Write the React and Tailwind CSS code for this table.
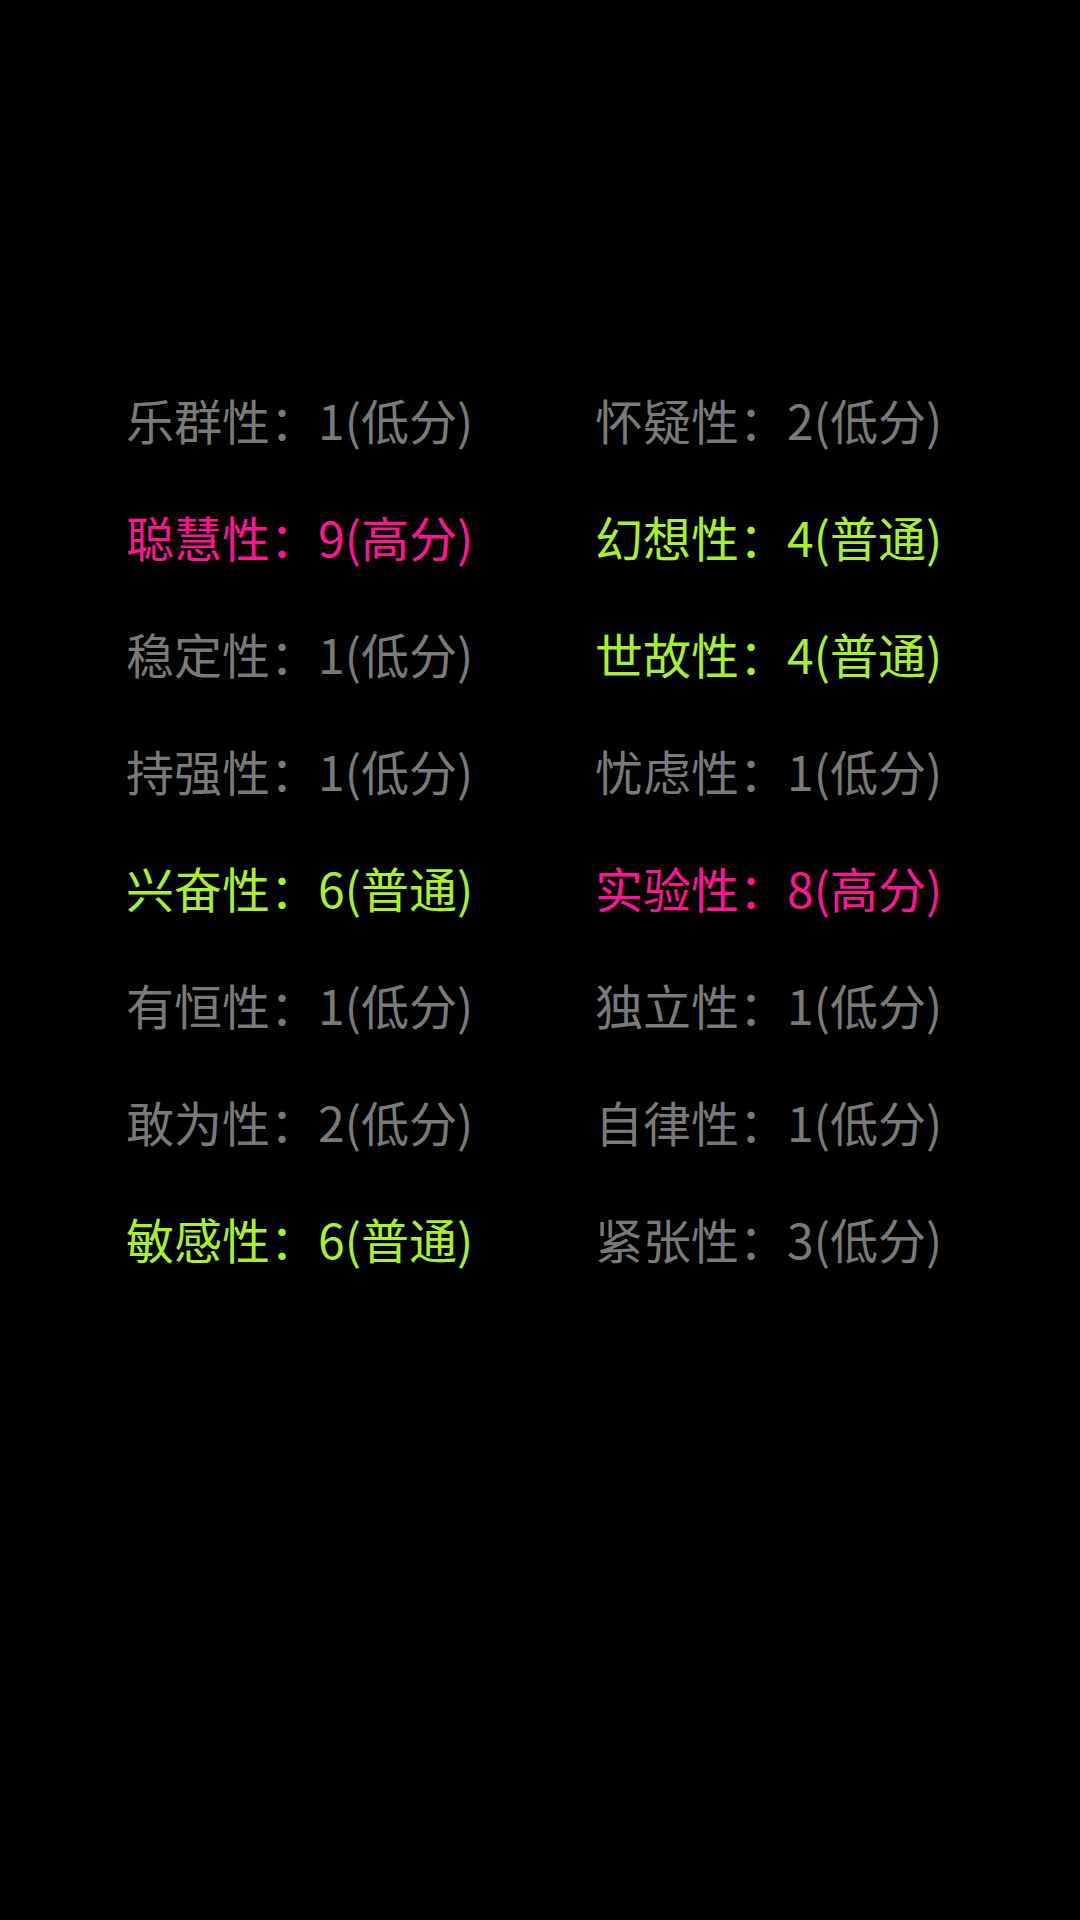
import React from "react";

const GRAY = "text-[#7a7a7a]";
const PINK = "text-[#ff1493]";
const GREEN = "text-[#a8f22c]";

const rows = [
  [["乐群性", "1(低分)", GRAY], ["怀疑性", "2(低分)", GRAY]],
  [["聪慧性", "9(高分)", PINK], ["幻想性", "4(普通)", GREEN]],
  [["稳定性", "1(低分)", GRAY], ["世故性", "4(普通)", GREEN]],
  [["持强性", "1(低分)", GRAY], ["忧虑性", "1(低分)", GRAY]],
  [["兴奋性", "6(普通)", GREEN], ["实验性", "8(高分)", PINK]],
  [["有恒性", "1(低分)", GRAY], ["独立性", "1(低分)", GRAY]],
  [["敢为性", "2(低分)", GRAY], ["自律性", "1(低分)", GRAY]],
  [["敏感性", "6(普通)", GREEN], ["紧张性", "3(低分)", GRAY]],
];

export default function App() {
  return (
    <div
      className="w-[1080px] h-[1920px] bg-black pt-[360px] pl-[126px]"
      style={{ fontFamily: '"Noto Sans CJK SC", "Noto Sans", sans-serif' }}
    >
      <div className="grid grid-cols-[469px_auto]">
        {rows.map((r, i) =>
          r.map(([k, v, c], j) => (
            <div key={i + "-" + j} className={`h-[117px] flex items-center text-[48px] leading-none whitespace-nowrap ${c}`}>
              {k}：{v}
            </div>
          ))
        )}
      </div>
    </div>
  );
}
